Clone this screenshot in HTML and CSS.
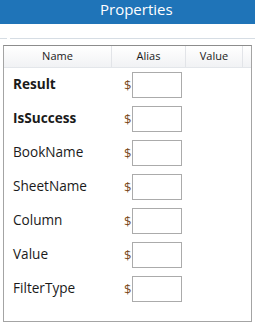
FILE: index.html
```html
<!DOCTYPE html>
<html lang="en">
<head>
    <meta charset="UTF-8">
    <title>Properties</title>
    <link rel="stylesheet" href="styles.css">
</head>
<body>
    <div class="titlebar">Properties</div>

    <div class="rule">
        <span class="rule-short"></span>
        <span class="rule-long"></span>
    </div>

    <div class="grid">
        <div class="grid-head">
            <div class="col col-name">Name</div>
            <div class="col col-alias">Alias</div>
            <div class="col col-value">Value</div>
            <div class="col col-rest"></div>
        </div>

        <div class="row"><span class="label bold">Result</span><span class="dollar">$</span><input class="alias" type="text"></div>
        <div class="row"><span class="label bold">IsSuccess</span><span class="dollar">$</span><input class="alias" type="text"></div>
        <div class="row"><span class="label">BookName</span><span class="dollar">$</span><input class="alias" type="text"></div>
        <div class="row"><span class="label">SheetName</span><span class="dollar">$</span><input class="alias" type="text"></div>
        <div class="row"><span class="label">Column</span><span class="dollar">$</span><input class="alias" type="text"></div>
        <div class="row"><span class="label">Value</span><span class="dollar">$</span><input class="alias" type="text"></div>
        <div class="row"><span class="label">FilterType</span><span class="dollar">$</span><input class="alias" type="text"></div>
    </div>
</body>
</html>
```

FILE: styles.css
```css
body {
    margin: 0;
    background: white;
    font-family: "Open Sans", "Noto Sans", sans-serif;
    color: #1a1a1a;
    width: 255px;
    height: 325px;
    overflow: hidden;
}

.titlebar {
    height: 24px;
    background: #1f74b8;
    color: white;
    font-size: 15px;
    line-height: 18px;
    padding-left: 100px;
    box-sizing: border-box;
}

.rule {
    display: flex;
    margin-top: 14px;
    height: 1px;
}

.rule-short {
    width: 7px;
    background: #d6dde4;
}

.rule-long {
    flex-grow: 1;
    margin-left: 3px;
    background: #d6dde4;
}

.grid {
    margin: 6px 0 0 3px;
    width: 249px;
    height: 277px;
    box-sizing: border-box;
    border: 1px solid #a4a4a4;
    border-top-color: #8c8c8c;
}

.grid-head {
    display: flex;
    height: 21px;
    background: linear-gradient(#ffffff, #f1f2f4);
    border-bottom: 1px solid #e3e6ea;
    font-size: 11px;
    line-height: 20px;
}

.col {
    text-align: center;
    border-right: 1px solid #e2e4e8;
}

.col-name { width: 107px; }
.col-alias { width: 73px; }
.col-value { width: 56px; }
.col-rest { flex-grow: 1; border-right: none; }

.row {
    display: flex;
    align-items: center;
    height: 34px;
    padding-left: 9px;
}

.label {
    width: 111px;
    font-size: 13.6px;
    line-height: 18px;
    margin-top: -2px;
}

.bold {
    font-weight: bold;
}

.dollar {
    width: 8px;
    font-size: 13px;
    color: #7a4a1e;
}

.alias {
    width: 50px;
    height: 26px;
    box-sizing: border-box;
    margin: 0;
    border: 1px solid #ababab;
    background: white;
}
```
